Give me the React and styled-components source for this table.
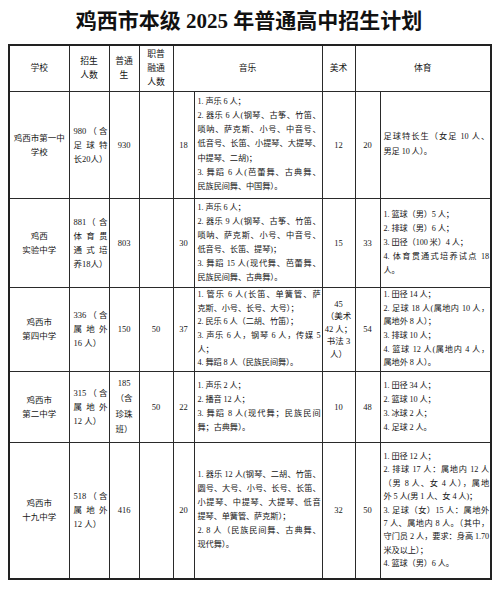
import styled, { createGlobalStyle } from 'styled-components';

const GlobalStyle = createGlobalStyle`
  body {
    margin: 0;
    background: #fff;
  }
`;

const Page = styled.div`
  width: 500px;
  height: 590px;
  box-sizing: border-box;
  padding: 8px 0 0 8px;
  font-family: "Liberation Serif", "Noto Sans CJK SC", serif;
  color: #161616;
  overflow: hidden;
`;

const Title = styled.h1`
  margin: 0;
  width: 482px;
  height: 36px;
  font-size: 21px;
  line-height: 26px;
  font-weight: 700;
  text-align: center;
  color: #111;
`;

const Table = styled.table`
  border-collapse: collapse;
  table-layout: fixed;
  width: 482px;
  border: 2px solid #222;
  font-size: 8.5px;
`;

const Row = styled.tr`
  height: ${p => p.$h}px;
`;

const HeadCell = styled.th`
  border: 1px solid #2a2a2a;
  padding: 0;
  font-weight: normal;
  font-size: 8.8px;
  line-height: 14px;
  text-align: center;
  vertical-align: middle;
`;

const Cell = styled.td`
  border: 1px solid #2a2a2a;
  padding: ${p => p.$pad || '0'};
  text-align: ${p => p.$align || 'center'};
  vertical-align: middle;
  line-height: ${p => p.$lh || 14}px;
  font-size: ${p => (p.$small ? '8.2px' : 'inherit')};
  letter-spacing: ${p => (p.$small ? '-0.1px' : 'normal')};
`;

const Line = styled.span`
  display: block;
  text-align: ${p => (p.$j ? 'justify' : 'inherit')};
  text-align-last: ${p => (p.$j ? 'justify' : 'auto')};
`;

const cols = [60, 40, 30, 34, 21, 128, 33, 25, 111];

const rows = [
  {
    h: 107,
    school: ['鸡西市第一中', '学校'],
    total: ['980（含', '足球特', '长20人）'],
    totalJ: true,
    regular: ['930'],
    vocational: [],
    musicN: '18',
    music: [
      ['1. 声乐 6 人；'],
      ['2. 器乐 6 人(钢琴、古筝、竹笛、', '唢呐、萨克斯、小号、中音号、', '低音号、长笛、小提琴、大提琴、', '中提琴、二胡)；'],
      ['3. 舞蹈 6 人(芭蕾舞、古典舞、', '民族民间舞、中国舞）。'],
    ],
    musicLh: 14.2,
    art: ['12'],
    sportN: '20',
    sport: [['足球特长生（女足 10 人、', '男足 10 人）。']],
    sportLh: 14.2,
  },
  {
    h: 89,
    school: ['鸡西', '实验中学'],
    total: ['881（ 含', '体育贯', '通式培', '养18人）'],
    totalJ: true,
    regular: ['803'],
    vocational: [],
    musicN: '30',
    music: [
      ['1. 声乐 6 人；'],
      ['2. 器乐 9 人(钢琴、古筝、竹笛、', '唢呐、萨克斯、小号、中音号、', '低音号、长笛、提琴)；'],
      ['3. 舞蹈 15 人(现代舞、芭蕾舞、', '民族民间舞、古典舞）。'],
    ],
    musicLh: 14,
    art: ['15'],
    sportN: '33',
    sport: [
      ['1. 篮球（男）5 人；'],
      ['2. 排球（男）6 人；'],
      ['3. 田径（100 米）4 人；'],
      ['4. 体育贯通式培养试点 18', '人。'],
    ],
    sportLh: 14,
  },
  {
    h: 84,
    school: ['鸡西市', '第四中学'],
    total: ['336（含', '属地外', '16 人）'],
    regular: ['150'],
    vocational: ['50'],
    musicN: '37',
    music: [
      ['1. 管乐 6 人(长笛、单簧管、萨', '克斯、小号、长号、大号）；'],
      ['2. 民乐 6 人（二胡、竹笛）；'],
      ['3. 声乐 6 人，钢琴 6 人，传媒 5', '人；'],
      ['4. 舞蹈 8 人（民族民间舞）。'],
    ],
    musicLh: 13.6,
    art: ['45', '（美术', '42 人；', '书法 3', '人）'],
    artLh: 12.5,
    sportN: '54',
    sport: [
      ['1. 田径 14 人；'],
      ['2. 足球 18 人(属地内 10 人，', '属地外 8 人）；'],
      ['3. 排球 10 人；'],
      ['4. 篮球 12 人(属地内 4 人，', '属地外 8 人）。'],
    ],
    sportLh: 13.6,
  },
  {
    h: 71,
    school: ['鸡西市', '第二中学'],
    total: ['315（含', '属地外', '12 人）'],
    regular: ['185', '（含', '珍珠', '班）'],
    regularLh: 15.5,
    vocational: ['50'],
    musicN: '22',
    music: [
      ['1. 声乐 2 人；'],
      ['2. 播音 12 人；'],
      ['3. 舞蹈 8 人(现代舞；民族民间', '舞；古典舞）。'],
    ],
    musicLh: 14,
    art: ['10'],
    sportN: '48',
    sport: [['1. 田径 34 人；'], ['2. 篮球 10 人；'], ['3. 冰球 2 人；'], ['4. 足球 2 人。']],
    sportLh: 14,
  },
  {
    h: 137,
    school: ['鸡西市', '十九中学'],
    total: ['518（含', '属地外', '12 人）'],
    regular: ['416'],
    vocational: [],
    musicN: '20',
    music: [
      ['1. 器乐 12 人(钢琴、二胡、竹笛、', '圆号、大号、小号、长号、长笛、', '小提琴、中提琴、大提琴、低音', '提琴、单簧管、萨克斯）；'],
      ['2. 8 人（民族民间舞、古典舞、', '现代舞）。'],
    ],
    musicLh: 14,
    art: ['32'],
    sportN: '50',
    sport: [
      ['1. 田径 12 人；'],
      ['2. 排球 17 人：属地内 12 人', '（男 8 人、女 4 人），属地', '外 5 人(男 1 人、女 4 人)；'],
      ['3. 足球（女）15 人：属地外', '7 人、属地内 8 人。（其中，', '守门员 2 人，要求：身高 1.70', '米及以上）；'],
      ['4. 篮球（男）6 人。'],
    ],
    sportLh: 13.4,
  },
];

const Lines = ({ items, justifyLast }) =>
  items.map((lines, i) =>
    lines.map((text, k) => (
      <Line key={`${i}-${k}`} $j={k < lines.length - 1 || justifyLast}>
        {text}
      </Line>
    ))
  );

const Stack = ({ lines }) => lines.map((t, i) => <Line key={i}>{t}</Line>);

const App = () => (
  <Page>
    <GlobalStyle />
    <Title>鸡西市本级 2025 年普通高中招生计划</Title>
    <Table>
      <colgroup>
        {cols.map((w, i) => (
          <col key={i} style={{ width: w }} />
        ))}
      </colgroup>
      <tbody>
        <Row $h={46}>
          <HeadCell>学校</HeadCell>
          <HeadCell>
            招生
            <br />
            人数
          </HeadCell>
          <HeadCell>
            普通
            <br />
            生
          </HeadCell>
          <HeadCell>
            职普
            <br />
            融通
            <br />
            人数
          </HeadCell>
          <HeadCell colSpan={2}>音乐</HeadCell>
          <HeadCell>美术</HeadCell>
          <HeadCell colSpan={2}>体育</HeadCell>
        </Row>
        {rows.map((r, i) => (
          <Row key={i} $h={r.h}>
            <Cell>
              <Stack lines={r.school} />
            </Cell>
            <Cell $align="left" $pad="0 1px 0 4px">
              <Lines items={[r.total]} justifyLast={r.totalJ} />
            </Cell>
            <Cell $lh={r.regularLh}>
              <Stack lines={r.regular} />
            </Cell>
            <Cell>
              <Stack lines={r.vocational} />
            </Cell>
            <Cell>{r.musicN}</Cell>
            <Cell $align="left" $pad="0 1px 0 3px" $lh={r.musicLh} $small>
              <Lines items={r.music} />
            </Cell>
            <Cell $lh={r.artLh}>
              <Stack lines={r.art} />
            </Cell>
            <Cell>{r.sportN}</Cell>
            <Cell $align="left" $pad="0 1px 0 3px" $lh={r.sportLh} $small>
              <Lines items={r.sport} />
            </Cell>
          </Row>
        ))}
      </tbody>
    </Table>
  </Page>
);

export default App;
